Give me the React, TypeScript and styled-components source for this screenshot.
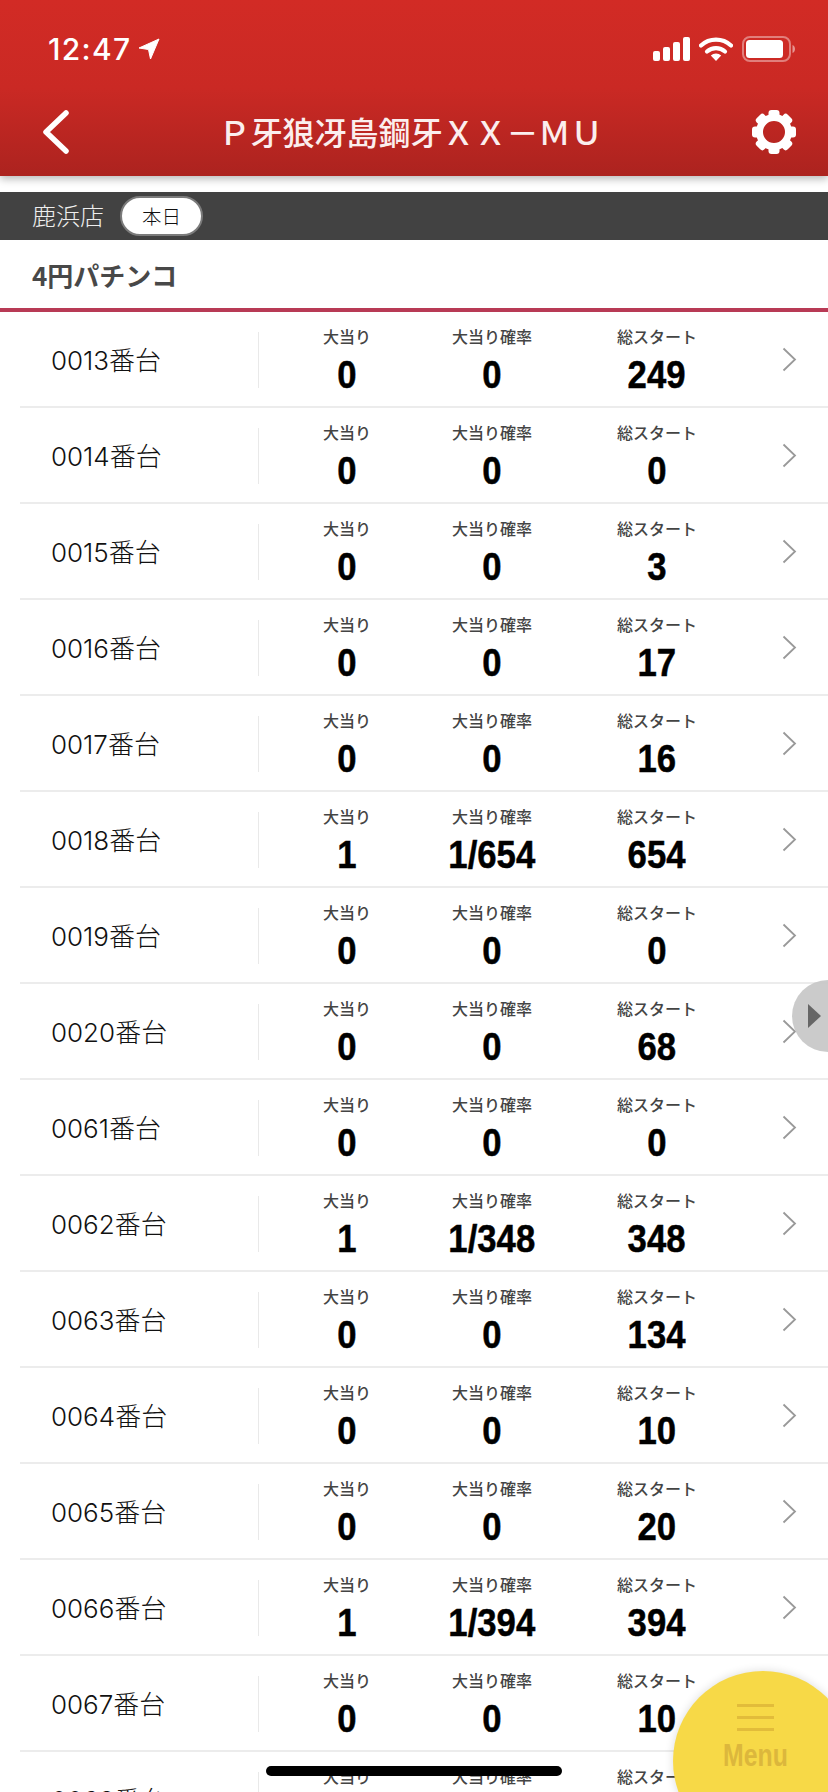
import React from 'react';
import styled, { createGlobalStyle } from 'styled-components';

const JP = `'Noto Sans CJK JP', 'Liberation Sans', sans-serif`;

const GlobalStyle = createGlobalStyle`
	html, body {
		margin: 0;
		padding: 0;
		background: #fff;
		overflow: hidden;
	}
	* {
		box-sizing: border-box;
	}
`;

const Page = styled.div`
	position: relative;
	width: 828px;
	height: 1792px;
	overflow: hidden;
	background: #fff;
	font-family: ${JP};
`;

const Header = styled.header`
	position: relative;
	z-index: 2;
	height: 176px;
	background: linear-gradient(180deg, #d22b25 0%, #ca2924 50%, #ac231f 100%);
	box-shadow: 0 3px 8px rgba(0, 0, 0, 0.28);
	color: #fff;
`;

const StatusBar = styled.div`
	display: flex;
	align-items: center;
	justify-content: space-between;
	height: 88px;
	padding: 10px 33px 0 48px;
`;

const Clock = styled.div`
	display: flex;
	align-items: center;
	gap: 7px;
	font-family: 'Inter', sans-serif;
	font-size: 30px;
	font-weight: 500;
	letter-spacing: 1.3px;
`;

const StatusIcons = styled.div`
	display: flex;
	align-items: center;
	gap: 9px;
`;

const NavBar = styled.div`
	display: flex;
	align-items: center;
	justify-content: space-between;
	height: 88px;
	padding: 0 31px 0 42px;
`;

const Title = styled.h1`
	margin: 0 0 2px;
	font-size: 32px;
	font-weight: 500;
	line-height: 1;
	color: #fbeeee;
`;

const ShopBar = styled.div`
	display: flex;
	align-items: center;
	gap: 16px;
	height: 48px;
	margin-top: 16px;
	padding-left: 32px;
	background: #424242;
`;

const ShopName = styled.span`
	margin-top: -3px;
	font-size: 24px;
	color: #eeeeee;
	font-weight: 300;
`;

const DayPill = styled.span`
	display: flex;
	align-items: center;
	justify-content: center;
	width: 83px;
	height: 40px;
	padding-bottom: 2px;
	border: 2px solid #7b7b7b;
	border-radius: 20px;
	background: #fff;
	color: #111;
	font-size: 19.5px;
	font-weight: 300;
`;

const SectionTitle = styled.h2`
	display: flex;
	align-items: center;
	height: 72px;
	margin: 0;
	padding: 0 0 0 32px;
	border-bottom: 4px solid #b83a55;
	color: #484848;
	font-size: 26px;
	font-weight: 700;
`;

const Row = styled.div`
	display: grid;
	grid-template-columns: 239px 176px 114px 216px 1fr;
	align-items: center;
	height: 96px;
	margin-left: 20px;
	border-bottom: 2px solid #ececec;
`;

const MachineNo = styled.div`
	display: flex;
	align-items: center;
	height: 56px;
	margin-top: 2px;
	padding: 0 0 4px 31px;
	border-right: 1px solid #e9e9e9;
	color: #111;
	font-family: 'Inter', 'Noto Sans CJK JP', sans-serif;
	font-size: 26px;
	font-weight: 300;
`;

const Stat = styled.div`
	display: flex;
	flex-direction: column;
	align-items: center;
	margin-top: 3px;
`;

const StatLabel = styled.span`
	height: 20px;
	color: #444;
	font-size: 16px;
	font-weight: 500;
	line-height: 20px;
	white-space: nowrap;
`;

// no condensed bold is installed, so the regular bold is squeezed
const StatValue = styled.span`
	height: 40px;
	margin-top: 9px;
	color: #000;
	font-family: 'Liberation Sans', sans-serif;
	font-size: 39px;
	font-weight: 700;
	line-height: 40px;
	white-space: nowrap;
	-webkit-text-stroke: 0.5px #000;
	transform: scaleX(0.89);
`;

const Chevron = styled.svg`
	justify-self: start;
	margin-left: 17px;
`;

const SideTab = styled.div`
	position: absolute;
	z-index: 3;
	top: 980px;
	left: 792px;
	display: flex;
	align-items: center;
	width: 72px;
	height: 72px;
	padding-left: 16px;
	border-radius: 50%;
	background: rgba(200, 200, 200, 0.95);
`;

const SideTabArrow = styled.span`
	width: 0;
	height: 0;
	border-top: 12px solid transparent;
	border-bottom: 12px solid transparent;
	border-left: 13px solid #666;
`;

const MenuButton = styled.div`
	position: absolute;
	z-index: 3;
	top: 1671px;
	left: 673px;
	display: flex;
	flex-direction: column;
	align-items: center;
	width: 180px;
	height: 180px;
	padding: 33px 16px 0 0;
	border-radius: 50%;
	background: #f7d947;
	box-shadow: 0 0 10px rgba(0, 0, 0, 0.14);
`;

const MenuLines = styled.span`
	display: flex;
	flex-direction: column;
	gap: 9px;
	width: 37px;
`;

const MenuLine = styled.i`
	display: block;
	height: 3px;
	background: #e2bc3a;
`;

const MenuText = styled.span`
	margin-top: 7px;
	color: #dcb73c;
	font-family: 'Liberation Sans', sans-serif;
	font-size: 31px;
	font-weight: 700;
	line-height: 36px;
	transform: scaleX(0.8);
`;

const HomeIndicator = styled.div`
	position: absolute;
	z-index: 2;
	top: 1766px;
	left: 266px;
	width: 296px;
	height: 10px;
	border-radius: 5px;
	background: #000;
`;

type Machine = {
	no: string;
	hits: string;
	rate: string;
	total: string;
};

const machines: Machine[] = [
	{ no: '0013', hits: '0', rate: '0', total: '249' },
	{ no: '0014', hits: '0', rate: '0', total: '0' },
	{ no: '0015', hits: '0', rate: '0', total: '3' },
	{ no: '0016', hits: '0', rate: '0', total: '17' },
	{ no: '0017', hits: '0', rate: '0', total: '16' },
	{ no: '0018', hits: '1', rate: '1/654', total: '654' },
	{ no: '0019', hits: '0', rate: '0', total: '0' },
	{ no: '0020', hits: '0', rate: '0', total: '68' },
	{ no: '0061', hits: '0', rate: '0', total: '0' },
	{ no: '0062', hits: '1', rate: '1/348', total: '348' },
	{ no: '0063', hits: '0', rate: '0', total: '134' },
	{ no: '0064', hits: '0', rate: '0', total: '10' },
	{ no: '0065', hits: '0', rate: '0', total: '20' },
	{ no: '0066', hits: '1', rate: '1/394', total: '394' },
	{ no: '0067', hits: '0', rate: '0', total: '10' },
	{ no: '0068', hits: '0', rate: '0', total: '0' },
];

const LocationArrow = () => (
	<svg width="22" height="22" viewBox="0 0 22 22">
		<path d="M21 1 L1 10 L10.5 11.5 L12.5 21 Z" fill="#fff" stroke="#fff" strokeWidth="1" strokeLinejoin="round" />
	</svg>
);

const SignalIcon = () => (
	<svg width="37" height="24" viewBox="0 0 37 24">
		<rect x="0" y="14" width="7" height="10" rx="2" fill="#fff" />
		<rect x="10" y="10" width="7" height="14" rx="2" fill="#fff" />
		<rect x="20" y="5" width="7" height="19" rx="2" fill="#fff" />
		<rect x="30" y="0" width="7" height="24" rx="2" fill="#fff" />
	</svg>
);

const WifiIcon = () => (
	<svg width="34" height="24" viewBox="0 0 34 24">
		<path d="M2 8.5 A22 22 0 0 1 32 8.5" fill="none" stroke="#fff" strokeWidth="4.2" strokeLinecap="round" />
		<path d="M8 14.5 A13.5 13.5 0 0 1 26 14.5" fill="none" stroke="#fff" strokeWidth="4.2" strokeLinecap="round" />
		<path d="M17 24 L11.8 18.6 A7.5 7.5 0 0 1 22.2 18.6 Z" fill="#fff" />
	</svg>
);

const BatteryIcon = () => (
	<svg width="53" height="26" viewBox="0 0 53 26">
		<rect x="1" y="1" width="47" height="24" rx="7" fill="none" stroke="#fff" strokeOpacity="0.4" strokeWidth="2" />
		<rect x="4" y="4" width="37" height="18" rx="3.5" fill="#fff" />
		<path d="M50.5 9 C52.5 10 53 11.5 53 13 C53 14.5 52.5 16 50.5 17 Z" fill="#fff" fillOpacity="0.5" />
	</svg>
);

const BackIcon = () => (
	<svg width="28" height="44" viewBox="0 0 28 44">
		<path d="M24 3 L4 22 L24 41" fill="none" stroke="#fff" strokeWidth="5.5" strokeLinecap="round" strokeLinejoin="round" />
	</svg>
);

const GearIcon = () => (
	<svg width="46" height="46" viewBox="0 0 46 46">
		<circle cx="23" cy="23" r="14.5" fill="none" stroke="#fff" strokeWidth="7" />
		{[0, 45, 90, 135, 180, 225, 270, 315].map((angle) => (
			<rect key={angle} x="17.5" y="1" width="11" height="10" rx="3" fill="#fff" transform={`rotate(${angle} 23 23)`} />
		))}
	</svg>
);

const RowChevron = () => (
	<Chevron width="15" height="25" viewBox="0 0 15 25">
		<path d="M1.5 1.5 L13 12.5 L1.5 23.5" fill="none" stroke="#999" strokeWidth="1.8" />
	</Chevron>
);

const MachineRow = ({ no, hits, rate, total }: Machine) => (
	<Row>
		<MachineNo>{no}番台</MachineNo>
		<Stat>
			<StatLabel>大当り</StatLabel>
			<StatValue>{hits}</StatValue>
		</Stat>
		<Stat>
			<StatLabel>大当り確率</StatLabel>
			<StatValue>{rate}</StatValue>
		</Stat>
		<Stat>
			<StatLabel>総スタート</StatLabel>
			<StatValue>{total}</StatValue>
		</Stat>
		<RowChevron />
	</Row>
);

const App = () => {
	return (
		<Page>
			<GlobalStyle />
			<Header>
				<StatusBar>
					<Clock>
						12:47
						<LocationArrow />
					</Clock>
					<StatusIcons>
						<SignalIcon />
						<WifiIcon />
						<BatteryIcon />
					</StatusIcons>
				</StatusBar>
				<NavBar>
					<BackIcon />
					<Title>Ｐ牙狼冴島鋼牙ＸＸ－ＭＵ</Title>
					<GearIcon />
				</NavBar>
			</Header>
			<ShopBar>
				<ShopName>鹿浜店</ShopName>
				<DayPill>本日</DayPill>
			</ShopBar>
			<SectionTitle>4円パチンコ</SectionTitle>
			{machines.map((machine) => (
				<MachineRow key={machine.no} {...machine} />
			))}
			<SideTab>
				<SideTabArrow />
			</SideTab>
			<MenuButton>
				<MenuLines>
					<MenuLine />
					<MenuLine />
					<MenuLine />
				</MenuLines>
				<MenuText>Menu</MenuText>
			</MenuButton>
			<HomeIndicator />
		</Page>
	);
};

export default App;
